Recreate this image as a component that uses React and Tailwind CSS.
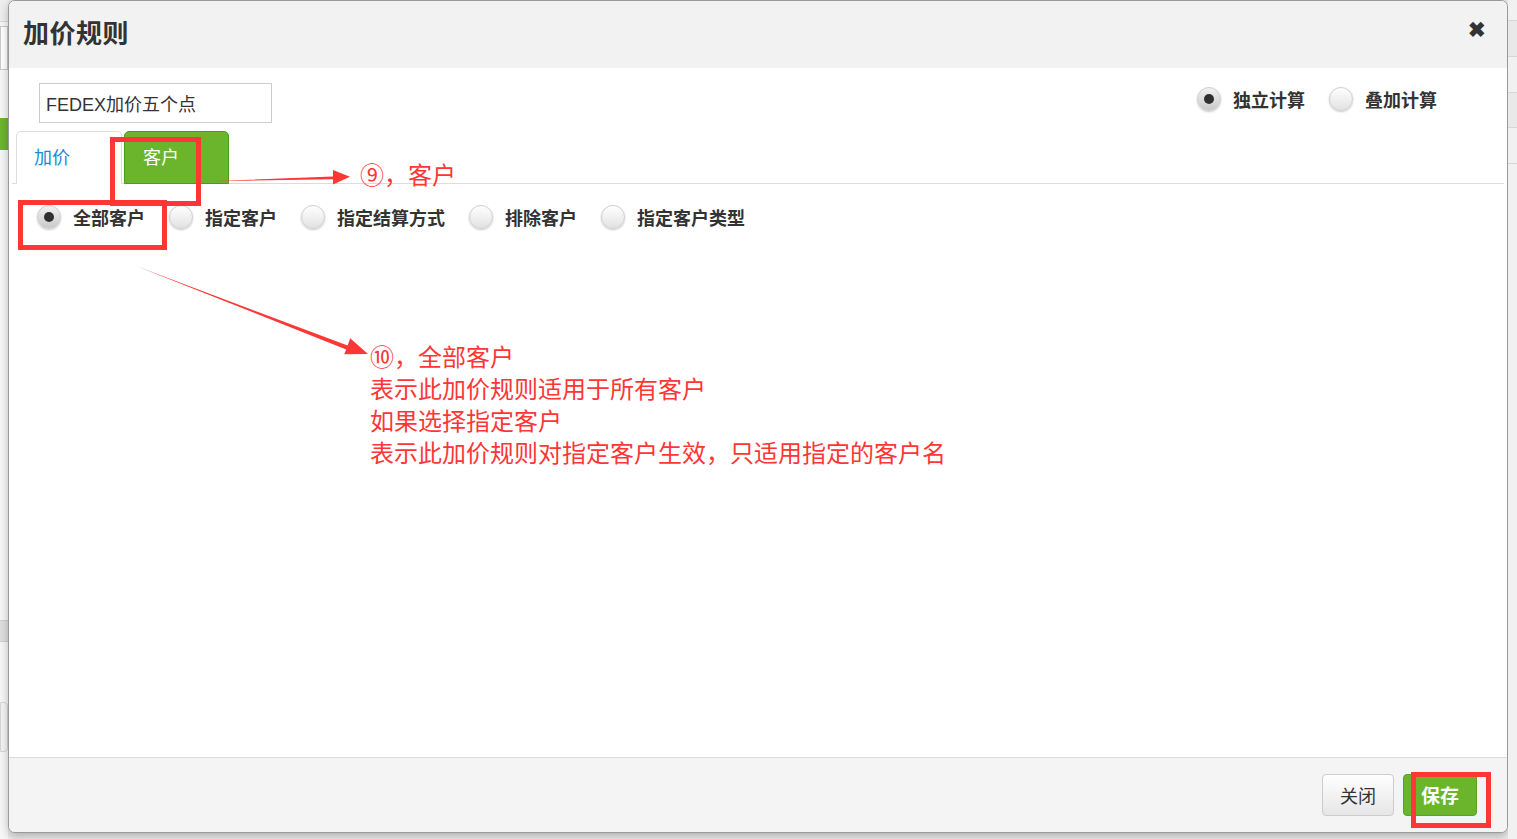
import { useState } from 'react'

const cjk = "font-['Microsoft_YaHei','Noto_Sans_CJK_SC',sans-serif]"

function Radio({ checked }) {
  return (
    <span
      className={`flex h-[24px] w-[24px] shrink-0 items-center justify-center rounded-full border border-[#cfcfcf] bg-linear-to-b shadow-[0_1px_2px_rgba(0,0,0,0.22)] ${
        checked ? 'from-[#f2f2f2] to-[#c9c9c9]' : 'from-[#ffffff] to-[#e2e2e2]'
      }`}
    >
      {checked && <span className="h-[10px] w-[10px] rounded-full bg-[#2f2f2f]" />}
    </span>
  )
}

function RadioOption({ label, checked, onClick }) {
  return (
    <button type="button" onClick={onClick} className="flex items-center gap-[12px]">
      <Radio checked={checked} />
      <span className="text-[18px] font-bold leading-none text-[#333]">{label}</span>
    </button>
  )
}

const customerScopes = ['全部客户', '指定客户', '指定结算方式', '排除客户', '指定客户类型']

export default function App() {
  const [mode, setMode] = useState('独立计算')
  const [scope, setScope] = useState('全部客户')
  const [tab, setTab] = useState('客户')
  const [name, setName] = useState('FEDEX加价五个点')

  return (
    <div className={`relative flex h-[839px] w-[1517px] overflow-hidden bg-[#e9e9e9] ${cjk}`}>
      {/* page behind the dialog */}
      <div className="flex w-[8px] flex-col bg-[#f6f6f6]">
        <div className="h-[22px] border-b border-[#d9d9d9] bg-[#eeeeee]" />
        <div className="mt-[4px] h-[44px] border border-[#c9c9c9] bg-white" />
        <div className="h-[48px]" />
        <div className="h-[32px] bg-[#6bb52d]" />
        <div className="h-[470px]" />
        <div className="h-[22px] border-y border-[#cfcfcf] bg-[#dedede]" />
        <div className="h-[60px]" />
        <div className="h-[50px] rounded-r-[4px] border border-[#d5d5d5] bg-[#f3f3f3]" />
      </div>

      <div className="flex h-[833px] w-[1500px] flex-col overflow-hidden rounded-[7px] border border-[#9a9a9a] bg-white shadow-[0_3px_8px_rgba(0,0,0,0.25)]">
        {/* header */}
        <div className="flex h-[67px] shrink-0 items-center justify-between bg-[#f2f2f2] pb-[6px] pl-[14px] pr-[21px]">
          <h1 className="text-[26px] font-bold tracking-[0.5px] text-[#333]">加价规则</h1>
          <button type="button" className="mb-[6px] text-[21px] font-bold leading-none text-[#333]">
            ✖
          </button>
        </div>

        {/* body */}
        <div className="flex flex-1 flex-col">
          <div className="mt-[15px] flex items-center justify-between pl-[30px] pr-[70px]">
            <input
              value={name}
              onChange={(e) => setName(e.target.value)}
              className="h-[40px] w-[233px] border border-[#cccccc] px-[6px] font-['Liberation_Sans','Noto_Sans_CJK_SC',sans-serif] text-[18px] text-[#333] outline-none"
            />
            <div className="-mt-[9px] flex items-center gap-[24px]">
              {['独立计算', '叠加计算'].map((m) => (
                <RadioOption key={m} label={m} checked={mode === m} onClick={() => setMode(m)} />
              ))}
            </div>
          </div>

          <div className="mx-[3px] mt-[8px] flex items-end gap-[2px] border-b border-[#dddddd] pl-[4px]">
            <button
              type="button"
              onClick={() => setTab('加价')}
              className="-mb-px flex h-[53px] w-[106px] items-center rounded-t-[5px] border border-b-0 border-[#dddddd] bg-white pb-[3px] pl-[17px] text-[18px] text-[#1a8ad6]"
            >
              加价
            </button>
            <button
              type="button"
              onClick={() => setTab('客户')}
              className="-mb-px flex h-[53px] w-[105px] items-center rounded-t-[5px] border border-[#4c9a22] bg-[#6bb52d] pb-[2px] pl-[18px] text-[18px] text-white"
            >
              客户
            </button>
          </div>

          <div className="mt-[21px] flex items-center gap-[24px] pl-[28px]">
            {customerScopes.map((s) => (
              <RadioOption key={s} label={s} checked={scope === s} onClick={() => setScope(s)} />
            ))}
          </div>
        </div>

        {/* footer */}
        <div className="flex h-[75px] shrink-0 items-center justify-end gap-[9px] border-t border-[#dcdcdc] bg-[#f4f4f4] pr-[30px]">
          <button
            type="button"
            className="h-[42px] w-[72px] rounded-[4px] border border-[#cccccc] bg-linear-to-b from-[#ffffff] to-[#e6e6e6] text-[18px] text-[#333]"
          >
            关闭
          </button>
          <button
            type="button"
            className="h-[42px] w-[74px] rounded-[4px] border border-[#58a323] bg-[#6bb52d] text-[19px] font-bold text-white"
          >
            保存
          </button>
        </div>
      </div>

      <div className="flex w-[9px] flex-col bg-[#f1f1f1]">
        <div className="h-[21px] border-b border-[#d6d6d6]" />
        <div className="h-[36px] border-b border-[#d6d6d6] bg-[#e9e9e9]" />
        <div className="h-[36px] border-b border-[#d6d6d6]" />
        <div className="h-[35px] border-b border-[#d6d6d6] bg-[#e9e9e9]" />
        <div className="h-[36px] border-b border-[#d6d6d6]" />
      </div>

      {/* red callouts drawn on top */}
      <svg className="pointer-events-none absolute inset-0" width="1517" height="839">
        <g fill="none" stroke="#ff3636" strokeWidth="5">
          <rect x="112.5" y="139.5" width="86" height="64" />
          <rect x="20.5" y="202.5" width="144" height="45" />
          <rect x="1413.5" y="774.5" width="75" height="51" />
        </g>
        <g fill="#ff3636">
          <polygon points="210,181.2 333,176.4 333,170 350,176.8 333,184.5 333,179.2" />
          <polygon points="136,266 347.6,345.6 350.2,338.2 368,354 344.2,354.3 346.2,349.4" />
        </g>
      </svg>
      <div className="pointer-events-none absolute left-[360px] top-[158px] text-[24px] leading-[32px] text-[#ff3636]">
        ⑨，客户
      </div>
      <div className="pointer-events-none absolute left-[370px] top-[340px] text-[24px] leading-[32px] text-[#ff3636]">
        <p>⑩，全部客户</p>
        <p>表示此加价规则适用于所有客户</p>
        <p>如果选择指定客户</p>
        <p>表示此加价规则对指定客户生效，只适用指定的客户名</p>
      </div>
    </div>
  )
}
